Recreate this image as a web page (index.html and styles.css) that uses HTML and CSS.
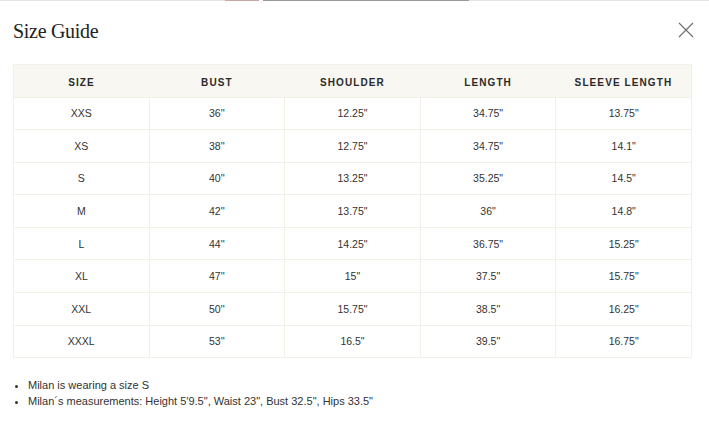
FILE: index.html
```html
<!DOCTYPE html>
<html>
<head>
<meta charset="utf-8">
<link rel="stylesheet" href="styles.css">
</head>
<body>
<div class="topbar">
  <span class="seg seg-light seg-a"></span>
  <span class="seg seg-pink"></span>
  <span class="seg seg-gap"></span>
  <span class="seg seg-dark"></span>
  <span class="seg seg-light seg-rest"></span>
</div>
<div class="modal">
  <div class="header">
    <h2 class="title">Size Guide</h2>
    <button class="close" aria-label="Close">
      <svg width="16" height="16" viewBox="0 0 16 16"><path d="M1 1L15 15M15 1L1 15" stroke="#6b6b6b" stroke-width="1.1" fill="none"/></svg>
    </button>
  </div>
  <table class="sizes">
    <thead>
      <tr><th>SIZE</th><th>BUST</th><th>SHOULDER</th><th>LENGTH</th><th>SLEEVE LENGTH</th></tr>
    </thead>
    <tbody>
      <tr><td>XXS</td><td>36''</td><td>12.25"</td><td>34.75"</td><td>13.75"</td></tr>
      <tr><td>XS</td><td>38''</td><td>12.75"</td><td>34.75"</td><td>14.1"</td></tr>
      <tr><td>S</td><td>40''</td><td>13.25"</td><td>35.25"</td><td>14.5"</td></tr>
      <tr><td>M</td><td>42''</td><td>13.75"</td><td>36"</td><td>14.8"</td></tr>
      <tr><td>L</td><td>44''</td><td>14.25"</td><td>36.75"</td><td>15.25"</td></tr>
      <tr><td>XL</td><td>47''</td><td>15"</td><td>37.5"</td><td>15.75"</td></tr>
      <tr><td>XXL</td><td>50''</td><td>15.75"</td><td>38.5"</td><td>16.25"</td></tr>
      <tr><td>XXXL</td><td>53''</td><td>16.5"</td><td>39.5"</td><td>16.75"</td></tr>
    </tbody>
  </table>
  <ul class="notes">
    <li>Milan is wearing a size S</li>
    <li>Milan´s measurements: Height 5'9.5", Waist 23", Bust 32.5", Hips 33.5"</li>
  </ul>
</div>
</body>
</html>
```
FILE: styles.css
```css
html, body {
  margin: 0;
  padding: 0;
  background: #fff;
}
body {
  font-family: "Liberation Sans", Arial, sans-serif;
  color: #333;
}
.topbar {
  display: flex;
  height: 1px;
}
.seg { display: block; height: 1px; }
.seg-light { background: #e4e4e4; }
.seg-a { width: 225px; }
.seg-pink { width: 34px; background: #c9aaa2; }
.seg-gap { width: 4px; background: #fff; }
.seg-dark { width: 206px; background: #999; }
.seg-rest { flex: 1; }
.modal {
  padding: 0 17px 0 13px;
}
.header {
  display: flex;
  align-items: center;
  justify-content: space-between;
  height: 63px;
}
.title {
  margin: 0;
  font-family: "Liberation Serif", "Times New Roman", serif;
  font-weight: normal;
  font-size: 20px;
  color: #222;
  letter-spacing: -0.3px;
  line-height: 24px;
  margin-top: -4px;
}
.close {
  background: none;
  border: 0;
  padding: 0;
  width: 16px;
  height: 16px;
  margin-right: -2px;
  margin-top: -5px;
  display: flex;
}
.sizes {
  width: 100%;
  border-collapse: collapse;
  table-layout: fixed;
  border: 1px solid #f3f0e8;
}
.sizes th {
  background: #f9f7f2;
  font-size: 10px;
  font-weight: bold;
  letter-spacing: 1.1px;
  color: #2a2a2a;
  height: 27.5px;
  padding: 4px 0 0;
  text-align: center;
  border-bottom: 1px solid #f3f0e8;
}
.sizes td {
  font-size: 10.5px;
  color: #333;
  height: 31.6px;
  padding: 0;
  text-align: center;
  border: 1px solid #f3f0e8;
}
.notes {
  margin: 19px 0 0;
  padding-left: 15px;
  font-size: 11px;
  line-height: 16px;
  color: #333;
}
.notes li { padding-left: 0; }
```
